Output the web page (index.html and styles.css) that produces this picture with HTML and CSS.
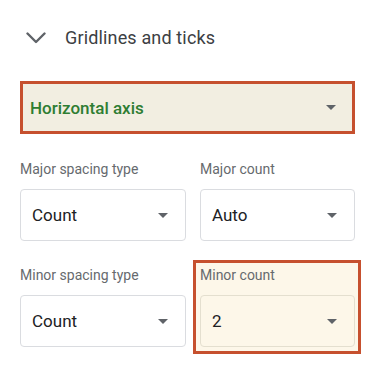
FILE: index.html
```html
<!DOCTYPE html>
<html>
<head>
<meta charset="utf-8">
<link rel="stylesheet" href="styles.css">
</head>
<body>
<div class="panel">
  <div class="header">
    <svg class="chevron" width="20" height="12" viewBox="0 0 20 12"><path d="M1.5 1.5 L10 10 L18.5 1.5" fill="none" stroke="#5f6368" stroke-width="2.4" stroke-linecap="round" stroke-linejoin="round"/></svg>
    <span class="title">Gridlines and ticks</span>
  </div>
  <div class="axis-select">
    <span class="axis-value">Horizontal axis</span>
    <span class="arrow"></span>
  </div>
  <div class="grid">
    <div class="field">
      <div class="label">Major spacing type</div>
      <div class="select"><span class="value">Count</span><span class="arrow"></span></div>
    </div>
    <div class="field">
      <div class="label">Major count</div>
      <div class="select"><span class="value">Auto</span><span class="arrow"></span></div>
    </div>
    <div class="field">
      <div class="label">Minor spacing type</div>
      <div class="select"><span class="value">Count</span><span class="arrow"></span></div>
    </div>
    <div class="field field-hl">
      <div class="label">Minor count</div>
      <div class="select select-hl"><span class="value">2</span><span class="arrow"></span></div>
    </div>
  </div>
</div>
</body>
</html>
```
FILE: styles.css
```css
html, body {
  margin: 0;
  padding: 0;
  background: #ffffff;
}
body {
  font-family: Roboto, "Liberation Sans", sans-serif;
  width: 382px;
  height: 366px;
  overflow: hidden;
}
.panel {
  padding-left: 20px;
  width: 335px;
}
.header {
  height: 74px;
  display: flex;
  align-items: center;
  padding-left: 6px;
  gap: 19px;
}
.chevron {
  display: block;
  margin-top: 2px;
}
.title {
  font-size: 18px;
  color: #3c4043;
  letter-spacing: 0.15px;
}
.axis-select {
  margin-top: 7px;
  height: 47px;
  border: 3px solid #c6502e;
  background: #f2eee1;
  display: flex;
  align-items: center;
  justify-content: space-between;
  padding: 0 16px 0 7px;
}
.axis-value {
  color: #2e7d32;
  font-size: 17px;
  font-weight: 500;
}
.arrow {
  width: 0;
  height: 0;
  border-left: 5px solid transparent;
  border-right: 5px solid transparent;
  border-top: 5px solid #5f6368;
}
.grid {
  margin-top: 25px;
  display: grid;
  grid-template-columns: 166px 155px;
  column-gap: 14px;
  row-gap: 24px;
}
.label {
  font-size: 14px;
  line-height: 20px;
  color: #666a6e;
}
.select {
  margin-top: 10px;
  height: 50px;
  border: 1px solid #dadce0;
  border-radius: 4px;
  background: #ffffff;
  display: flex;
  align-items: center;
  justify-content: space-between;
  padding: 0 17px 0 11px;
}
.value {
  font-size: 17px;
  color: #202124;
}
.field-hl {
  margin: -5px -6px -7px -7px;
  border: 3px solid #c6502e;
  padding: 2px 3px 4px 4px;
  background: #fdf7e9;
}
.select-hl {
  background: transparent;
  border-color: #e4dfcf;
}
```
